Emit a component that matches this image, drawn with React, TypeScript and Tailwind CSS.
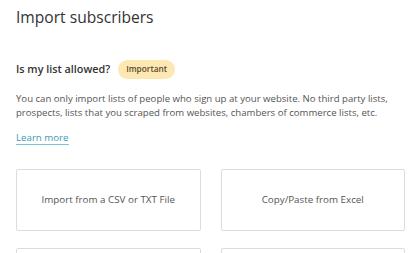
export default function App() {
  return (
    <div className="min-h-screen bg-white pl-4 pr-[14px] pt-[5px] font-['Open_Sans',sans-serif] text-[#555]">
      <h1 className="text-[15.6px] leading-[24px] text-[#333]">Import subscribers</h1>

      <div className="mt-[31px] flex h-[19px] items-center gap-[8px]">
        <span className="text-[10.8px] font-semibold text-[#333]">Is my list allowed?</span>
        <span className="flex h-[19px] items-center rounded-full bg-[#fde8b3] px-[8px] text-[8.3px] font-semibold text-[#5a4a2a]">
          Important
        </span>
      </div>

      <p className="mt-[12.5px] text-[9.6px] leading-[14.3px]">
        You can only import lists of people who sign up at your website. No third party lists,
        prospects, lists that you scraped from websites, chambers of commerce lists, etc.
      </p>

      <a href="#" className="mt-[12px] inline-block border-b border-[#7cc5d6] text-[9.7px] leading-[12px] text-[#3a9bb3]">
        Learn more
      </a>

      <div className="mt-[21.7px] grid grid-cols-2 gap-x-[20px] gap-y-[16.7px]">
        <div className="flex h-[62.3px] items-center justify-center rounded-[2px] border border-[#dcdcdc] text-[9.8px]">
          Import from a CSV or TXT File
        </div>
        <div className="flex h-[62.3px] items-center justify-center rounded-[2px] border border-[#dcdcdc] text-[9.8px]">
          Copy/Paste from Excel
        </div>
        <div className="h-[62.3px] rounded-[2px] border border-[#dcdcdc]" />
        <div className="h-[62.3px] rounded-[2px] border border-[#dcdcdc]" />
      </div>
    </div>
  );
}
